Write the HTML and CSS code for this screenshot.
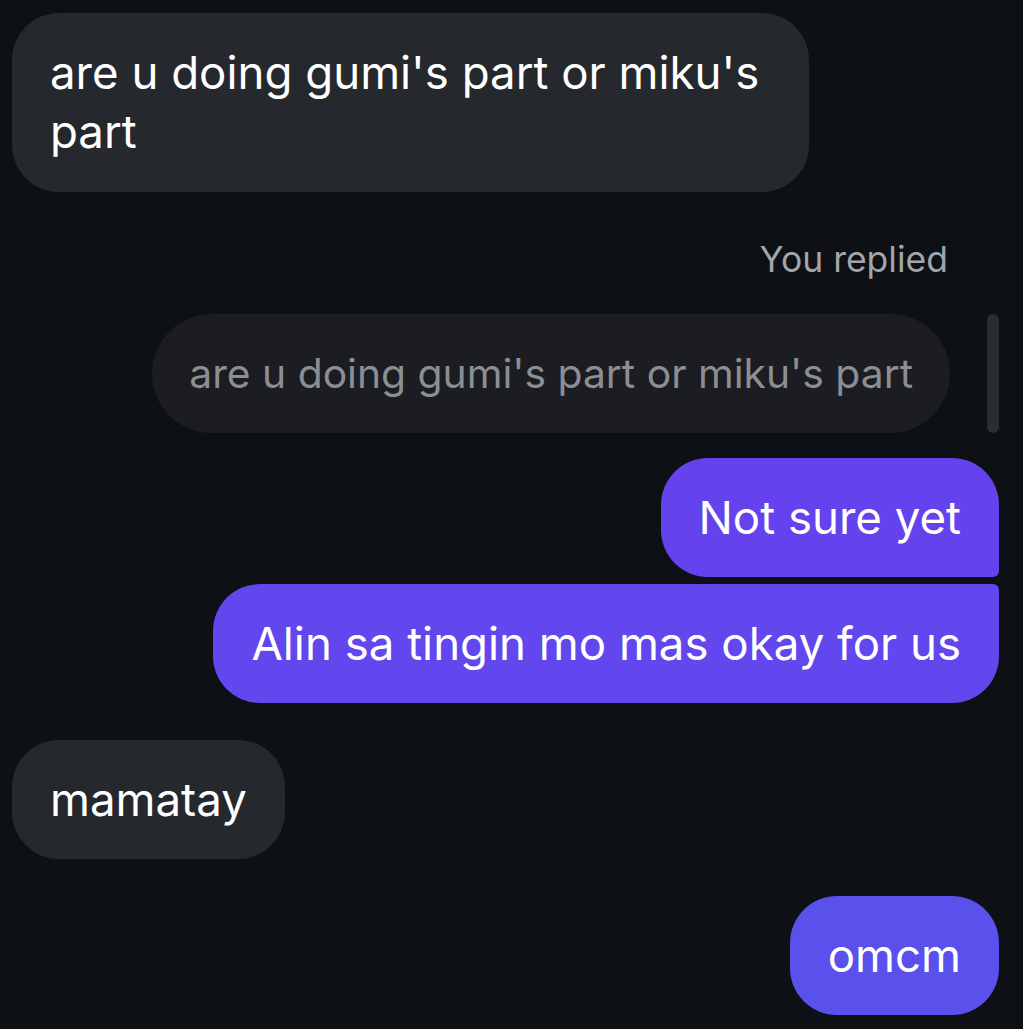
FILE: index.html
```html
<!DOCTYPE html>
<html lang="en">
  <head>
    <meta charset="UTF-8" />
    <meta name="viewport" content="width=device-width, initial-scale=1.0" />
    <title>Chat</title>
    <link rel="stylesheet" href="styles.css">
  </head>
  <body>
    <div class="chat">
      <div class="msg msg-in first">
        <div class="bubble">are u doing gumi's part or miku's part</div>
      </div>

      <div class="reply">
        <div class="reply-label">You replied</div>
        <div class="reply-row">
          <div class="quote">are u doing gumi's part or miku's part</div>
          <div class="reply-bar"></div>
        </div>
      </div>

      <div class="group group-out">
        <div class="msg msg-out">
          <div class="bubble top">Not sure yet</div>
        </div>
        <div class="msg msg-out">
          <div class="bubble bottom">Alin sa tingin mo mas okay for us</div>
        </div>
      </div>

      <div class="msg msg-in spaced">
        <div class="bubble">mamatay</div>
      </div>

      <div class="msg msg-out spaced">
        <div class="bubble last">omcm</div>
      </div>
    </div>
  </body>
</html>
```

FILE: styles.css
```css
body {
  font-family: Inter, "Noto Sans", sans-serif;
  background: #0d1015;
  color: #fff;
  margin: 0;
  padding: 0;
}
.chat {
  display: flex;
  flex-direction: column;
  padding: 13px 24px 0 12px;
}
.msg {
  display: flex;
}
.msg-in {
  justify-content: flex-start;
}
.msg-out {
  justify-content: flex-end;
}
.spaced {
  margin-top: 37px;
}
.bubble {
  box-sizing: border-box;
  max-width: 797px;
  padding: 30px 38px;
  font-size: 45.6px;
  line-height: 59px;
  border-radius: 47px;
  background: #25282d;
}
.first .bubble {
  padding-bottom: 31px;
}
.msg-out .bubble {
  background: #6443ee;
}
.msg-out .bubble.top {
  border-bottom-right-radius: 6px;
}
.msg-out .bubble.bottom {
  background: #6247ee;
  border-top-right-radius: 6px;
}
.msg-out .bubble.last {
  background: #5a51ed;
}
.group {
  display: flex;
  flex-direction: column;
  gap: 7px;
  margin-top: 25px;
}
/* reply preview */
.reply {
  display: flex;
  flex-direction: column;
  align-items: flex-end;
  margin-top: 48px;
}
.reply-label {
  color: #a2a5aa;
  font-size: 35.5px;
  line-height: 40px;
  margin-right: 51px;
}
.reply-row {
  display: flex;
  align-items: stretch;
  gap: 37px;
  margin-top: 34px;
}
.quote {
  padding: 30px 37px;
  font-size: 40.8px;
  line-height: 59px;
  color: #8b8e93;
  background: #1b1d22;
  border-radius: 60px;
}
.reply-bar {
  width: 12px;
  border-radius: 6px;
  background: #2a2d32;
}
```
